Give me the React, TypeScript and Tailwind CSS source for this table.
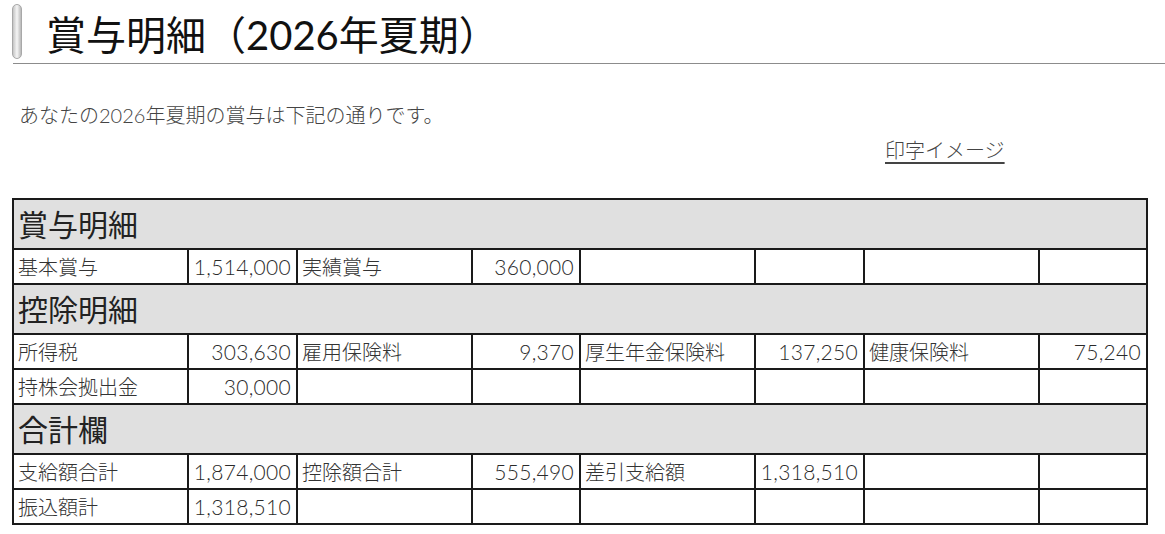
import React from "react";

type Row = string[];

const sections: { title: string; rows: Row[] }[] = [
  {
    title: "賞与明細",
    rows: [["基本賞与", "1,514,000", "実績賞与", "360,000", "", "", "", ""]],
  },
  {
    title: "控除明細",
    rows: [
      ["所得税", "303,630", "雇用保険料", "9,370", "厚生年金保険料", "137,250", "健康保険料", "75,240"],
      ["持株会拠出金", "30,000", "", "", "", "", "", ""],
    ],
  },
  {
    title: "合計欄",
    rows: [
      ["支給額合計", "1,874,000", "控除額合計", "555,490", "差引支給額", "1,318,510", "", ""],
      ["振込額計", "1,318,510", "", "", "", "", "", ""],
    ],
  },
];

const colWidths = [175, 109, 175, 108, 175, 109, 175, 108];

export default function App() {
  return (
    <div
      className="w-[1165px] min-h-[534px] bg-white text-[#333]"
      style={{ fontFamily: 'Lato, "Noto Sans CJK JP", "Noto Sans", sans-serif' }}
    >
      {/* page title */}
      <div className="ml-[13px] flex items-start border-b-[1.5px] border-[#8c8c8c] pt-[4px]">
        <div className="-ml-px h-[55px] w-[10px] rounded-[5px] border border-[#a8a8a8] bg-linear-to-r from-[#c4c4c4] via-[#f6f6f6] to-[#b8b8b8]" />
        <h1 className="ml-[24px] pt-[4px] text-[40px] leading-[55px] text-[#111]">
          賞与明細（2026年夏期）
        </h1>
      </div>

      <p className="ml-[19px] mt-[37px] text-[20px] font-light leading-[28px] text-[#444]">
        あなたの2026年夏期の賞与は下記の通りです。
      </p>

      <div className="mt-[7px] flex pl-[885px]">
        <a
          href="#"
          className="text-[20px] font-light leading-[28px] text-[#444] underline decoration-[1.5px] underline-offset-[4px]"
        >
          印字イメージ
        </a>
      </div>

      <div className="mt-[34px] pl-[12px]">
        <table className="w-[1134px] table-fixed border-collapse border-2 border-[#1a1a1a]">
          <colgroup>
            {colWidths.map((w, i) => (
              <col key={i} style={{ width: w }} />
            ))}
          </colgroup>
          <tbody>
            {sections.map((s) => (
              <React.Fragment key={s.title}>
                <tr className="h-[50px] bg-[#e0e0e0]">
                  <td
                    colSpan={8}
                    className="border-2 border-[#1a1a1a] pl-[4px] text-[30px] leading-none text-[#222]"
                  >
                    {s.title}
                  </td>
                </tr>
                {s.rows.map((r, ri) => (
                  <tr key={ri} className="h-[35px]">
                    {r.map((c, ci) => (
                      <td
                        key={ci}
                        className={
                          ci % 2 === 0
                            ? "border-2 border-[#1a1a1a] pl-[4px] text-[20px] font-light leading-none whitespace-nowrap"
                            : "border-2 border-[#1a1a1a] pr-[5px] text-right text-[21px] font-light leading-none tracking-[0.3px] text-[#2a2a2a] whitespace-nowrap"
                        }
                      >
                        {c}
                      </td>
                    ))}
                  </tr>
                ))}
              </React.Fragment>
            ))}
          </tbody>
        </table>
      </div>
    </div>
  );
}
